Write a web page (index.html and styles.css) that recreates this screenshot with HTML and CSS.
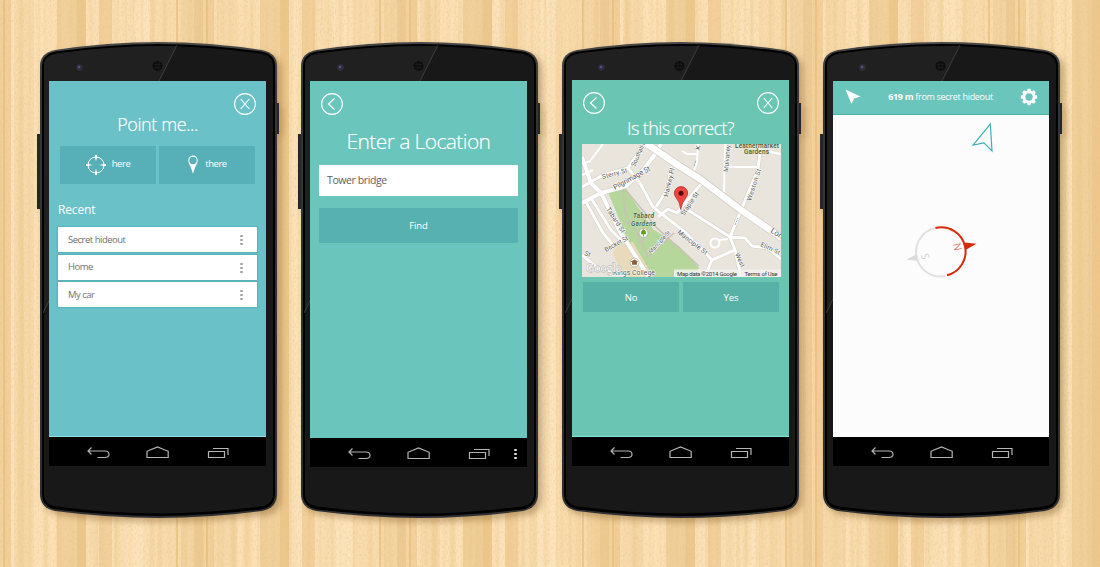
FILE: index.html
```html
<!DOCTYPE html>
<html lang="en">
<head>
<meta charset="utf-8">
<title>Point me</title>
<link rel="stylesheet" href="styles.css">
</head>
<body>
<svg class="grain" width="1100" height="567" aria-hidden="true">
  <filter id="wood" x="0" y="0" width="100%" height="100%">
    <feTurbulence type="fractalNoise" baseFrequency="0.16 0.0015" numOctaves="2" seed="4"/>
    <feColorMatrix values="0 0 0 0 .80  0 0 0 0 .55  0 0 0 0 .22  1.2 0 0 0 -.5"/>
  </filter>
  <filter id="speck" x="0" y="0" width="100%" height="100%">
    <feTurbulence type="fractalNoise" baseFrequency="0.6 0.35" numOctaves="2" seed="9"/>
    <feColorMatrix values="0 0 0 0 .76  0 0 0 0 .52  0 0 0 0 .22  1 0 0 0 -.47"/>
  </filter>
  <rect width="1100" height="567" filter="url(#wood)"/>
  <rect width="1100" height="567" filter="url(#speck)"/>
</svg>

<svg class="defs" aria-hidden="true">
  <defs>
    <linearGradient id="edge" x1="0" y1="0" x2="0" y2="1"><stop offset="0" stop-color="#484848"/><stop offset=".1" stop-color="#353637"/><stop offset="1" stop-color="#2f3033"/></linearGradient>
    <clipPath id="face"><path d="M3 24Q3 12 17 10Q70 3 118.500 3Q167 3 220 10Q234 12 234 24V452Q234 464 221 466Q165 473 118.500 473Q72 473 16 466Q3 464 3 452Z"/></clipPath>
    <symbol id="frame" viewBox="-4 0 245 480">
      <path d="M-3 92h4v75h-4zM236 61h3v31h-3z" fill="#25262a"/>
      <path d="M0 24Q0 11 15 8Q68 0 118.500 0Q169 0 222 8Q237 11 237 24V452Q237 466 222 469Q168 476 118.500 476Q69 476 15 469Q0 466 0 452Z" fill="url(#edge)"/>
      <path d="M2 24Q2 12 16 9.500Q70 2 118.500 2Q167 2 221 9.500Q235 12 235 24V452Q235 465 221 467.500Q165 474 118.500 474Q72 474 16 467.500Q2 465 2 452Z" fill="#000"/>
      <g clip-path="url(#face)">
        <path d="M4 24Q4 13.500 17 11.500Q70 4 118.500 4Q167 4 220 11.500Q233 13.500 233 24V452Q233 462.500 221 464.500Q165 471.500 118.500 471.500Q72 471.500 16 464.500Q4 462.500 4 452Z" fill="#181818"/>
        <path d="M4 24Q4 13.500 17 11.500Q70 4 118.500 4H136.700L4 269.400Z" fill="#202020"/>
        <path d="M137 3L3 271" stroke="#484848" stroke-width=".8"/>
      </g>
      <circle cx="39.500" cy="25.500" r="3.200" fill="#302d3c"/><circle cx="39" cy="25" r="1.300" fill="#54518c"/>
      <circle cx="117.500" cy="24" r="5.500" fill="#0c0c0c" stroke="#292929" stroke-width=".7"/>
      <path d="M114 22.500h7M114 25.500h7M116 20v8M119 20v8" stroke="#222" stroke-width=".6"/>
    </symbol>
    <symbol id="close" viewBox="0 0 24 24"><circle cx="12" cy="12" r="10.400"/><path d="M7.700 7l8.600 10M16.300 7l-8.600 10"/></symbol>
    <symbol id="prev" viewBox="0 0 24 24"><circle cx="12" cy="12" r="10.400"/><path d="M14.500 6.500l-6 5.500 6 5.500"/></symbol>
    <symbol id="nav" viewBox="0 0 217 28">
      <path d="M42.500 9.500L39 13l3.500 3.500M39.500 13H56q4 0 4 3.200T56 19.500h-7.500"/>
      <path d="M98 19.500v-6.200L108.500 9l10.700 4.300v6.200z"/>
      <path d="M159.500 13.500h16v6h-16zM164 10.500h15v6.500"/>
    </symbol>
  </defs>
</svg>

<main class="stage">
  <section class="phone phone-a">
    <svg class="frame"><use href="#frame"/></svg>
    <div class="screen">
      <div class="app">
        <div class="top"><i></i><svg class="ring"><use href="#close"/></svg></div>
        <h1 class="title">Point me...</h1>
        <div class="pair">
          <div class="tile"><svg width="20" height="20" viewBox="0 0 20 20"><circle cx="10" cy="10" r="8" fill="none" stroke="#fff" stroke-width="1"/><path d="M9 0h2v2.500L10 6.500 9 2.500zM9 20h2v-2.500l-1-4-1 4zM0 9v2h2.500l4-1-4-1zM20 9v2h-2.500l-4-1 4-1z" fill="#fff"/></svg><span>here</span></div>
          <div class="tile"><svg width="12" height="20" viewBox="0 0 12 20"><path d="M6 .6A4.700 4.700 0 0 0 1.300 5.400C1.300 8.500 4 11 6 19C8 11 10.700 8.500 10.700 5.400A4.700 4.700 0 0 0 6 .6Z" fill="#fff"/><circle cx="6" cy="5.500" r="3.700" fill="#57afb7"/></svg><span>there</span></div>
        </div>
        <h2 class="recent">Recent</h2>
        <ul class="list">
          <li><span>Secret hideout</span><i class="dots"></i></li>
          <li><span>Home</span><i class="dots"></i></li>
          <li><span>My car</span><i class="dots"></i></li>
        </ul>
      </div>
      <div class="navbar"><svg class="nav"><use href="#nav"/></svg></div>
    </div>
  </section>

  <section class="phone phone-b">
    <svg class="frame"><use href="#frame"/></svg>
    <div class="screen">
      <div class="app">
        <div class="top"><svg class="ring"><use href="#prev"/></svg></div>
        <h1 class="title">Enter a Location</h1>
        <div class="field">Tower bridge</div>
        <div class="find">Find</div>
      </div>
      <div class="navbar"><svg class="nav"><use href="#nav"/></svg><i class="dots"></i></div>
    </div>
  </section>

  <section class="phone phone-c">
    <svg class="frame"><use href="#frame"/></svg>
    <div class="screen">
      <div class="app">
        <div class="top"><svg class="ring"><use href="#prev"/></svg><svg class="ring"><use href="#close"/></svg></div>
        <h1 class="title">Is this correct?</h1>
        <svg class="map" width="199" height="133" viewBox="582 144 199 133">
          <rect x="582" y="144" width="199" height="133" fill="#e9e5dc"/>
          <path d="M607 190L624 187L640 210L653 229L680 247L699 268L691 277H648L630 245Z" fill="#b5d79b"/>
          <path d="M615 245L633 242L653 277H624L613 254Z" fill="#e8dabb"/>
          <g fill="none" stroke="#cbc1b6" stroke-width="1.500"><path d="M623 188L625 212L638 235L648 257L674 233M624 188L645 213L656 227L699 266M625 222L634 224M638 243L645 239"/></g>
          <g fill="none" stroke="#d2ccc3" stroke-linejoin="round">
            <g stroke-width="5"><path d="M582 203L601 193L626 186L641 173L656 153L661 144M582 157L591 183L601 193L619 230L650 279"/></g>
            <g stroke-width="4"><path d="M582 187L603 175L628 168L640 150M628 168L640 183L653 207L686 233L712 260L735 250M704 279L712 260M671 167L668 188L656 207M658 217L668 209L677 213L701 184M688 210L730 237L745 238L752 246L768 248L781 259M760 153L758 169L742 208L730 237L735 250L741 277M586 202L603 233L613 245M591 198L611 230L622 241M582 255L600 270"/></g>
          </g>
          <g fill="none" stroke="#fff" stroke-linejoin="round">
            <g stroke-width="4"><path d="M582 203L601 193L626 186L641 173L656 153L661 144M582 157L591 183L601 193L619 230L650 279"/></g>
            <g stroke-width="3"><path d="M582 187L603 175L628 168L640 150M628 168L640 183L653 207L686 233L712 260L735 250M704 279L712 260M671 167L668 188L656 207M658 217L668 209L677 213L701 184M688 210L730 237L745 238L752 246L768 248L781 259M760 144V153L758 169L742 208L730 237L735 250L741 277M586 202L603 233L613 245M591 198L611 230L622 241M582 255L600 270"/></g>
            <g stroke-width="2"><path d="M725 144L724 193M729 167H757M682 151L687 154H697M698 144L697 162L692 176M582 175L593 170M582 164L590 161L603 144M760 150L781 154M728 239L719 240"/><circle cx="715" cy="243" r="4.500"/></g>
            <path d="M644 142L680 166.500L700 179L741 210L782 238" stroke="#d2ccc3" stroke-width="8"/>
            <path d="M644 142L680 166.500L700 179L741 210L782 238" stroke-width="6.500"/>
          </g>
          <g class="street">
            <text transform="translate(602.500 179) rotate(-15)" textLength="26">Sterry St</text>
            <text transform="translate(615 190) rotate(-29)" textLength="41" font-size="7.300">Pilgrimage St</text>
            <text transform="translate(635 167) rotate(-66)" textLength="29">Southall Pl</text>
            <text transform="translate(668 197) rotate(-77)" textLength="29">Hankey Pl</text>
            <text transform="translate(606 209) rotate(57)" textLength="29">Tabard St</text>
            <text transform="translate(606 252) rotate(-29)" textLength="26">Becket St</text>
            <text transform="translate(651 254) rotate(-47)" textLength="29" font-size="5.800">Manciple St</text>
            <text transform="translate(677 233) rotate(38)" textLength="36">Manciple St</text>
            <text transform="translate(684 216) rotate(-56)" textLength="27">Staple St</text>
            <text transform="translate(728 172) rotate(-85)" textLength="27">Mulvaney</text>
            <text transform="translate(751 201) rotate(-72)" textLength="33">Weston St</text>
            <text transform="translate(735 254) rotate(66)" textLength="15">West</text>
            <text transform="translate(760 246) rotate(25)" textLength="21">Elim St</text>
            <text transform="translate(770 232) rotate(33)" font-size="8">Lon</text>
            <text transform="translate(584 255) rotate(20)">St</text>
            <text transform="translate(700 150) rotate(-80)">K</text>
            <text x="613" y="275" textLength="42" font-size="7">Kings College</text>
          </g>
          <g class="park"><text x="633" y="218" textLength="21">Tabard</text><text x="631" y="225.500" textLength="25">Gardens</text><text class="green" x="735" y="147.500" textLength="44">Leathermarket</text><text class="green" x="744" y="154" textLength="25">Gardens</text></g>
          <circle cx="643.500" cy="233" r="4.500" fill="#fff" stroke="#b1a898" stroke-width=".8"/><path d="M643.500 229.500q3 1.500 2 4.500h-4q-1-3 2-4.500M643.500 233v3.500" fill="#5ea31e" stroke="#5ea31e" stroke-width=".8"/>
          <circle cx="634.500" cy="262.500" r="4.500" fill="#fff" stroke="#b1a898" stroke-width=".8"/><path d="M631 261.500l3.500-2 3.500 2-1 .8v2.500h-5v-2.500z" fill="#89613c"/>
          <text class="google" x="586" y="271.500" textLength="35">Google</text>
          <path d="M674 269.500h107v7.500H674z" fill="#f4f2ee" opacity=".85"/>
          <g class="credit"><text x="677" y="275.700" textLength="60">Map data ©2014 Google</text><text x="744.500" y="275.700" textLength="33">Terms of Use</text></g>
          <path d="M735 225l3-7M694 166l2-6" stroke="#90a8cb" stroke-width="1" stroke-dasharray="2 1"/>
          <path d="M680.800 209.500Q680 202 676 197.500A6.600 6.600 0 1 1 686 197.500Q682 202 680.800 209.500Z" fill="#f1453d" stroke="#9d211b" stroke-width=".7"/><circle cx="681" cy="193.300" r="2.500" fill="#4a0808"/>
        </svg>
        <div class="pair"><div class="tile">No</div><div class="tile">Yes</div></div>
      </div>
      <div class="navbar"><svg class="nav"><use href="#nav"/></svg></div>
    </div>
  </section>

  <section class="phone phone-d">
    <svg class="frame"><use href="#frame"/></svg>
    <div class="screen">
      <div class="app">
        <header class="bar">
          <svg width="16" height="16" viewBox="0 0 16 16"><path d="M.5.500L15.500 7.500 9 9.500 6.500 15z" fill="#fff"/></svg>
          <p><b>619 m</b> from secret hideout</p>
          <svg width="18" height="18" viewBox="-9 -9 18 18"><g fill="#fff"><path id="tooth" d="M-2 -6L-1.400 -8.200H1.400L2 -6V6L1.400 8.200H-1.400L-2 6Z"/><use href="#tooth" transform="rotate(45)"/><use href="#tooth" transform="rotate(90)"/><use href="#tooth" transform="rotate(135)"/><circle r="6.400"/></g><circle r="3.700" fill="#6ac5bc"/></svg>
        </header>
        <svg class="compass" width="216" height="322" viewBox="833 115 216 322">
          <path d="M990.300 124L992 151L984 142.800L973 145Z" fill="none" stroke="#3fb0b6" stroke-width="1.200"/>
          <path d="M935.500 228A24.300 24.300 0 0 0 945.500 276" fill="none" stroke="#e1e1e1" stroke-width="2"/>
          <path d="M935.500 228A24.300 24.300 0 0 1 947 275.300" fill="none" stroke="#d52b0d" stroke-width="2"/>
          <path d="M964.500 242.500L976.500 243.700L965.500 250Z" fill="#d52b0d"/><path d="M917 254L906.500 259.500L918.500 261Z" fill="#dcdcdc"/>
          <text transform="translate(953 244) rotate(78)" fill="#d52b0d">N</text><text transform="translate(929.500 258.500) rotate(258)" fill="#b8b8b8">S</text>
        </svg>
      </div>
      <div class="navbar"><svg class="nav"><use href="#nav"/></svg></div>
    </div>
  </section>
</main>
</body>
</html>
```
FILE: styles.css
```css
* { box-sizing: border-box; }

body {
  margin: 0;
  width: 1100px;
  height: 567px;
  overflow: hidden;
  font-family: "Open Sans", "Noto Sans", sans-serif;
  color: #fff;
  background: repeating-linear-gradient(90deg,
    #f5d5a3 0 3px, #eac384 3px 5px, #f3d09a 5px 11px, #fbe2ba 11px 14px, #f7daab 14px 34px,
    #fce1b6 34px 57px, #f1d09c 57px 77px, #edc78c 77px 86px, #fbe2ba 86px 99px, #f3d09b 99px 112px,
    #f9dfb3 112px 131px, #fce3bb 131px 150px, #f9dcae 150px 176px, #edc68a 176px 178px, #f8dbac 178px 181px,
    #f4d5a3 181px 194px, #eecb97 194px 203px);
}

.grain { position: absolute; inset: 0; z-index: -1; }
.defs { position: absolute; width: 0; height: 0; }

.stage { display: flex; gap: 24px; padding: 42px 40px; }
.phone { position: relative; width: 237px; height: 476px; flex: none; padding: 39px 0 0 9px; }
.frame {
  position: absolute; left: -4px; top: 0; width: 245px; height: 480px; z-index: -1; overflow: visible;
  filter: drop-shadow(4px 4px 3px rgba(110, 70, 20, .38));
}
.screen { width: 217px; display: flex; flex-direction: column; }
.app { height: 356px; display: flex; flex-direction: column; overflow: hidden; }
.navbar { position: relative; height: 29px; background: #000; }
.nav { display: block; width: 217px; height: 28px; margin-top: 1px; fill: none; stroke: #b4b4b4; stroke-width: 1.2; }

.top { display: flex; justify-content: space-between; height: 24px; margin: 11px 9.500px 0; }
.ring { width: 24px; height: 24px; fill: none; stroke: #fff; stroke-width: 1.1; }
.title { margin: 0; font-weight: 300; text-align: center; white-space: nowrap; -webkit-text-stroke: .2px #fff; }
.pair { display: flex; }
.tile, .find { display: flex; align-items: center; justify-content: center; font-size: 9.500px; letter-spacing: -.1px; }
.tile { width: 96px; }
.dots {
  width: 3px; height: 11px;
  background: radial-gradient(circle, currentColor 1px, transparent 1.500px) 0 0 / 3px 4px;
}

.phone-a .app { background: #6ac1c7; border-bottom: 1px solid #86dfe1; }
.phone-a .title { font-size: 18px; line-height: 24px; margin-top: -4px; letter-spacing: -.4px; }
.phone-a .pair { gap: 3px; margin: 10px 0 0 11px; }
.phone-a .tile { height: 38px; background: #57afb7; gap: 6px; letter-spacing: -.45px; }
.phone-a .tile span { margin-top: -3px; }
.recent { margin: 16px 0 0 9px; font-size: 12px; line-height: 19px; font-weight: 400; letter-spacing: -.15px; }
.list { margin: 8px 9px 0; padding: 0; list-style: none; display: flex; flex-direction: column; gap: 2.500px; }
.list li {
  height: 25px; padding: 0 14px 0 10px; display: flex; align-items: center; justify-content: space-between;
  background: #fff; color: #707070; font-size: 9.500px; letter-spacing: -.5px; box-shadow: 0 0 1px 1px #5ab4ba;
}
.list li span { margin-top: -1px; }
.list .dots { color: #a2a2a2; }

.phone-b .app { height: 357px; background: #6ac5bc; }
.phone-b .title { font-size: 21px; line-height: 28px; margin-top: 11px; letter-spacing: -.6px; }
.field { height: 31px; margin: 10px 9px 0; padding-left: 8px; line-height: 31px; font-size: 10.500px; letter-spacing: -.4px; background: #fff; color: #606060; }
.find { height: 35px; margin: 12px 9px 0; background: #57b1b0; }
.phone-b .dots { position: absolute; right: 10px; top: 10px; color: #e0e0e0; }

.phone-c { padding: 38px 0 0 10px; }
.phone-c .app { height: 357px; background: #6ac6b2; border-bottom: 1px solid #83e6cf; }
.phone-c .title { font-size: 18px; line-height: 24px; margin-top: 1px; letter-spacing: -.6px; }
.map { display: block; margin: 4px 0 0 10px; font-family: Roboto, sans-serif; font-size: 6.500px; }
.street { fill: #555; stroke: #fff; stroke-width: 1; paint-order: stroke; }
.park { fill: #3d5633; font-style: italic; font-weight: 500; stroke: #e4eedb; stroke-width: .7; paint-order: stroke; }
.green { font-style: normal; }
.google { fill: #fff; stroke: #aaa; stroke-width: .9; paint-order: stroke; font: 12px "Liberation Serif", serif; }
.credit { fill: #333; font-size: 6px; }
.phone-c .pair { gap: 4px; margin: 5px 0 0 11px; }
.phone-c .tile { height: 30px; background: #57b1a6; }

.phone-d { padding-left: 10px; }
.phone-d .screen { width: 216px; }
.phone-d .app { background: #fcfcfc; }
.bar {
  height: 34px; padding: 0 11px 2px 12px; display: flex; align-items: center; justify-content: space-between;
  background: #6ac5bc; border-bottom: 1px solid #50b1aa;
}
.bar p { margin: 0; font-size: 9px; letter-spacing: -.3px; white-space: nowrap; }
.compass { display: block; font-size: 10.500px; font-weight: 300; }
```
